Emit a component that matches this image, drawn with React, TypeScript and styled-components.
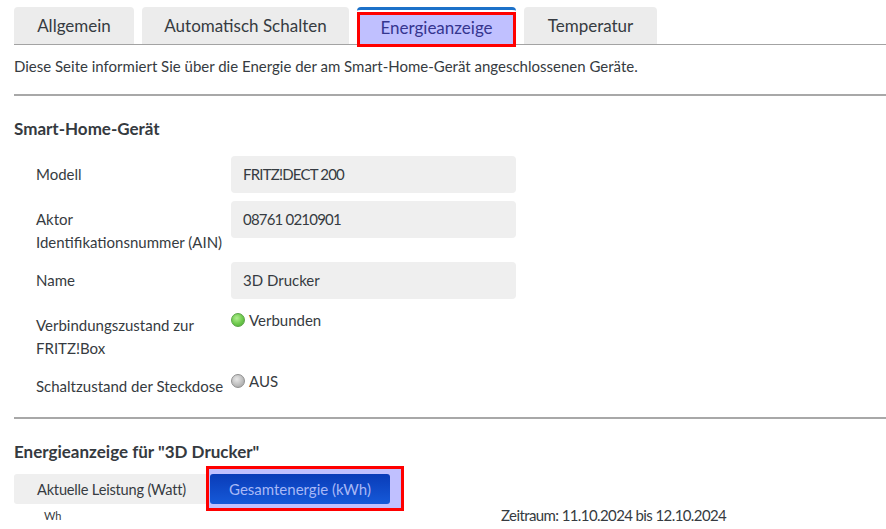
import React from "react";
import styled, { createGlobalStyle, css } from "styled-components";

const Global = createGlobalStyle`
  html, body { margin: 0; padding: 0; background: #fff; }
  body {
    font-family: Lato, "Noto Sans", sans-serif;
    color: #363b41;
    font-size: 15px;
    overflow: hidden;
  }
`;

const Page = styled.div`
  padding: 7px 0 0 14px;
  width: 872px;
`;

const TabBar = styled.div`
  display: flex;
  gap: 8px;
  border-bottom: 1px solid #a3a3a3;
  height: 37px;
`;

const Tab = styled.div<{ $w: number; $active?: boolean }>`
  width: ${(p) => p.$w}px;
  height: 37px;
  box-sizing: border-box;
  border-radius: 4px 4px 0 0;
  background: #ececec;
  font-size: 17px;
  display: flex;
  align-items: center;
  justify-content: center;
  color: #363b41;
  ${(p) =>
    p.$active &&
    css`
      background: #fff;
      border-top: 3px solid #1c71c9;
      align-items: flex-start;
      padding-top: 2px;
    `}
`;

const Highlight = styled.div`
  box-sizing: border-box;
  border: 3px solid #f00;
  background: #c0c0ff;
`;

const TabHighlight = styled(Highlight)`
  width: 100%;
  height: 35px;
  display: flex;
  align-items: center;
  justify-content: center;
  color: #35358f;
  padding-bottom: 5px;
`;

const Intro = styled.p`
  margin: 9px 0 0;
  line-height: 24px;
`;

const Rule = styled.div<{ $top: number }>`
  margin-top: ${(p) => p.$top}px;
  height: 2px;
  background: #a8a8a8;
`;

const Heading = styled.h2`
  margin: 21px 0 0;
  font-size: 17px;
  font-weight: 700;
  line-height: 24px;
  color: #353a40;
`;

const Fields = styled.div`
  margin: 15px 0 0 22px;
  display: grid;
  grid-template-columns: 195px 285px;
  row-gap: 8px;
  line-height: 23px;
`;

const Label = styled.div`
  padding-top: 7px;
`;

const ValueBox = styled.div<{ $tight?: boolean }>`
  height: 37px;
  box-sizing: border-box;
  background: #efefef;
  border-radius: 4px;
  padding: 7px 12px;
  align-self: start;
  letter-spacing: ${(p) => (p.$tight ? "-0.8px" : "0")};
`;

const Status = styled.div`
  padding-top: 2px;
  display: flex;
  align-items: flex-start;
  gap: 4px;
`;

const Dot = styled.span<{ $on?: boolean }>`
  width: 14px;
  height: 14px;
  margin-top: 4px;
  border-radius: 50%;
  box-sizing: border-box;
  flex: none;
  ${(p) =>
    p.$on
      ? css`
          background: radial-gradient(circle at 40% 35%, #b0ee90 0%, #72cc50 50%, #48a832 100%);
          border: 1px solid #5aa346;
        `
      : css`
          background: radial-gradient(circle at 40% 35%, #e8e8e8 0%, #c2c2c2 50%, #9c9c9c 100%);
          border: 1px solid #8f8f8f;
        `}
`;

const ButtonRow = styled.div`
  margin-top: 10px;
  display: flex;
`;

const PlainButton = styled.div`
  width: 196px;
  height: 30px;
  box-sizing: border-box;
  background: #efefef;
  border-radius: 3px 0 0 3px;
  display: flex;
  align-items: center;
  padding-left: 23px;
  font-size: 14.6px;
  letter-spacing: -0.2px;
`;

const Marked = styled.div`
  position: relative;
`;

const MarkFrame = styled(Highlight)`
  position: absolute;
  left: -4px;
  top: -8px;
  right: -14px;
  bottom: -7px;
`;

const BlueButton = styled.div`
  position: relative;
  width: 180px;
  height: 30px;
  border-radius: 3px;
  background: linear-gradient(#0a3cb8, #1559d8);
  color: #a8b8f6;
  display: flex;
  align-items: center;
  justify-content: center;
  font-size: 15px;
`;

const ChartHead = styled.div`
  margin-top: 0;
  display: grid;
  grid-template-columns: 487px 1fr;
  align-items: end;
`;

const Unit = styled.span`
  padding-left: 30px;
  font-size: 11px;
  line-height: 20px;
`;

const Period = styled.span`
  line-height: 22px;
  letter-spacing: -0.6px;
`;

export default function App() {
  return (
    <>
      <Global />
      <Page>
        <TabBar>
          <Tab $w={120}>Allgemein</Tab>
          <Tab $w={207}>Automatisch Schalten</Tab>
          <Tab $w={159} $active>
            <TabHighlight>Energieanzeige</TabHighlight>
          </Tab>
          <Tab $w={133}>Temperatur</Tab>
        </TabBar>
        <Intro>
          Diese Seite informiert Sie über die Energie der am Smart-Home-Gerät angeschlossenen Geräte.
        </Intro>
        <Rule $top={16} />
        <Heading>Smart-Home-Gerät</Heading>
        <Fields>
          <Label>Modell</Label>
          <ValueBox $tight>FRITZ!DECT 200</ValueBox>
          <Label>
            Aktor
            <br />
            Identifikationsnummer (AIN)
          </Label>
          <ValueBox $tight>08761 0210901</ValueBox>
          <Label>Name</Label>
          <ValueBox>3D Drucker</ValueBox>
          <Label>
            Verbindungszustand zur
            <br />
            FRITZ!Box
          </Label>
          <Status>
            <Dot $on />
            Verbunden
          </Status>
          <Label>Schaltzustand der Steckdose</Label>
          <Status>
            <Dot />
            AUS
          </Status>
        </Fields>
        <Rule $top={19} />
        <Heading>Energieanzeige für "3D Drucker"</Heading>
        <ButtonRow>
          <PlainButton>Aktuelle Leistung (Watt)</PlainButton>
          <Marked>
            <MarkFrame />
            <BlueButton>Gesamtenergie (kWh)</BlueButton>
          </Marked>
        </ButtonRow>
        <ChartHead>
          <Unit>Wh</Unit>
          <Period>Zeitraum: 11.10.2024 bis 12.10.2024</Period>
        </ChartHead>
      </Page>
    </>
  );
}
